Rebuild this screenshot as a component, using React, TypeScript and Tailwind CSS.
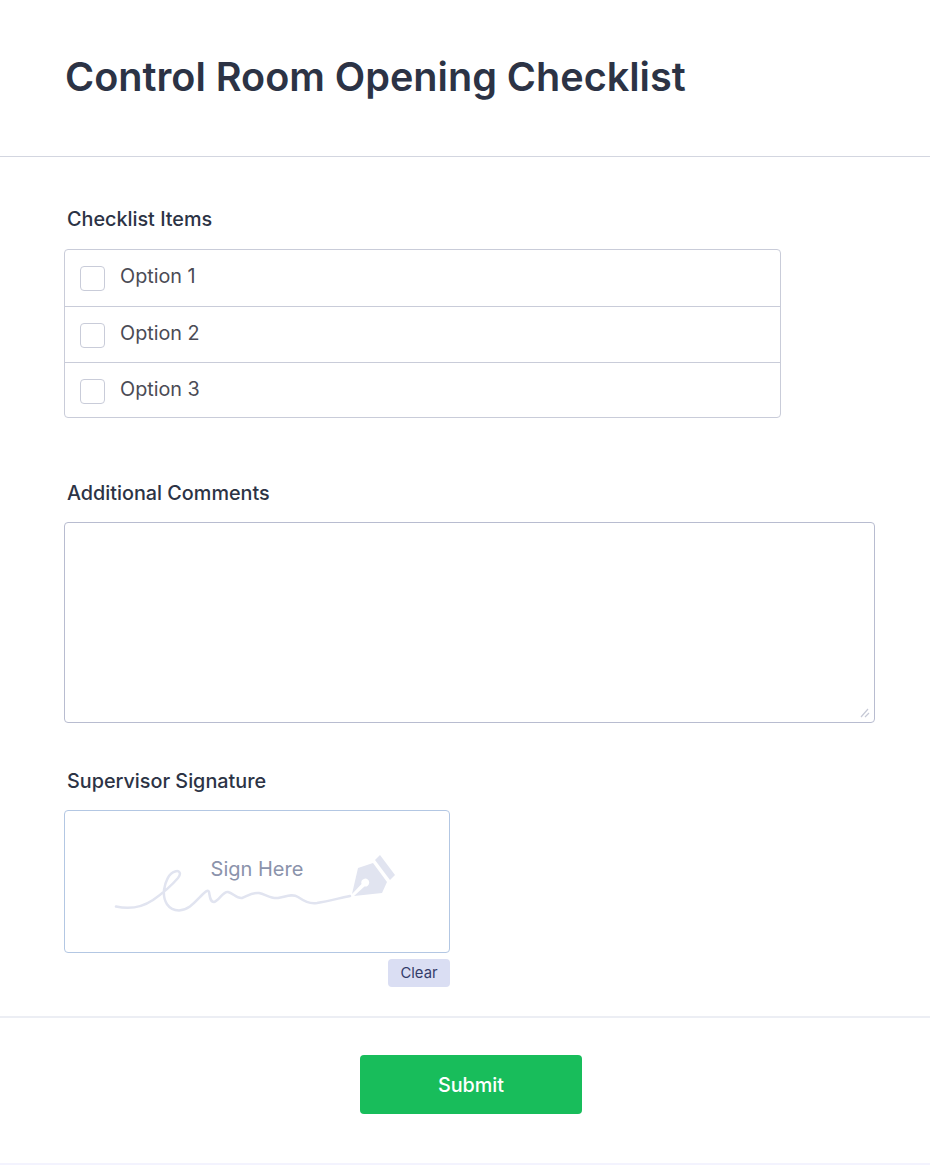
const options = ["Option 1", "Option 2", "Option 3"];

const SignatureArt = () => (
  <svg className="absolute left-[-1px] top-[-1px]" width="386" height="143" viewBox="64 810 386 143" fill="none">
    <path
      d="M116 906.5 C127 909 141 908 153 900 C163 893 172 885 178 878 C182 873 179 870 175 871.5 C169 873 165 882 164 890 C163 901 168 910 179 910.5 C189 910 195 902 201 896 C205 892 208 889 209 892 C210 897 210 902 214 902 C219 901 223 891 228 892 C233 893 237 899 242 898 C247 896 253 892 259 893 C265 894 271 899 278 898 C285 897 292 893 298 897 C304 901 309 904 317 903 C329 901 340 898 350 896"
      stroke="#e1e4f0"
      strokeWidth="2.5"
      strokeLinecap="round"
    />
    <path d="M380 855 L395 875 L390 880 L375 860 Z" fill="#e1e4f0" />
    <path
      fillRule="evenodd"
      d="M358 868 L373 863 L387 882 L382 893 L354 896 L364.5 886.5 A4 4 0 1 0 361.5 884 L352 894 Z"
      fill="#e1e4f0"
    />
  </svg>
);

const App = () => {
  return (
    <div className="w-[930px] h-[1166px] bg-white font-['Inter',sans-serif] text-[#2c3345] flex flex-col">
      <div className="h-[157px] border-b border-[#d3d6e0] pl-[65px] pt-[51px]">
        <h1 className="text-[39.6px] leading-[52px] font-semibold">Control Room Opening Checklist</h1>
      </div>

      <div className="pl-[64px] pt-[50px]">
        <div className="pl-[3px] text-[19.8px] leading-[24px] font-medium">Checklist Items</div>
        <div className="mt-[18px] w-[717px] border border-[#c9ccd9] rounded-[4px]">
          {options.map((o, i) => (
            <div
              key={o}
              className={`flex items-start pl-[15px] gap-[15px] ${i > 0 ? "border-t border-[#c9ccd9]" : ""} ${i === 2 ? "h-[55px]" : "h-[56px]"}`}
            >
              <span className="w-[25px] h-[25px] mt-[16px] bg-white border border-[#c9ccd9] rounded-[4px]" />
              <span className="text-[19.8px] leading-[24px] text-[#4b4b55] mt-[14px]">{o}</span>
            </div>
          ))}
        </div>

        <div className="mt-[63px] pl-[3px] text-[19.8px] leading-[24px] font-medium">Additional Comments</div>
        <div className="relative mt-[17px] w-[811px] h-[201px]">
          <textarea className="block w-full h-full resize-none border border-[#b8bcd0] rounded-[4px] bg-white outline-none" />
          <svg className="absolute left-[796px] top-[186px]" width="10" height="10" viewBox="0 0 10 10" fill="none">
            <path d="M1 9 L8 1 M5 9 L9 5" stroke="#c6c9d6" strokeWidth="1.2" />
          </svg>
        </div>

        <div className="mt-[46px] pl-[3px] text-[19.8px] leading-[24px] font-medium">Supervisor Signature</div>
        <div className="relative mt-[17px] w-[386px] h-[143px] border border-[#b3c7e3] rounded-[4px] bg-white">
          <SignatureArt />
          <div className="relative text-center pt-[46px] text-[20px] leading-[24px] text-[#8b93ab]">Sign Here</div>
        </div>
        <div className="w-[386px] flex justify-end mt-[6px]">
          <button className="w-[62px] h-[28px] bg-[#dadef3] rounded-[4px] text-[14.8px] text-[#343c6a]">Clear</button>
        </div>
      </div>

      <div className="mt-[29px] h-[147px] border-t-2 border-[#eceef4] flex justify-center pt-[37px] pl-[12px]">
        <button className="w-[222px] h-[59px] pt-[2px] bg-[#18bd5b] rounded-[4px] text-[19.8px] font-medium text-white">
          Submit
        </button>
      </div>
      <div className="h-[2px] bg-[#f3f3fe]" />
    </div>
  );
};

export default App;
